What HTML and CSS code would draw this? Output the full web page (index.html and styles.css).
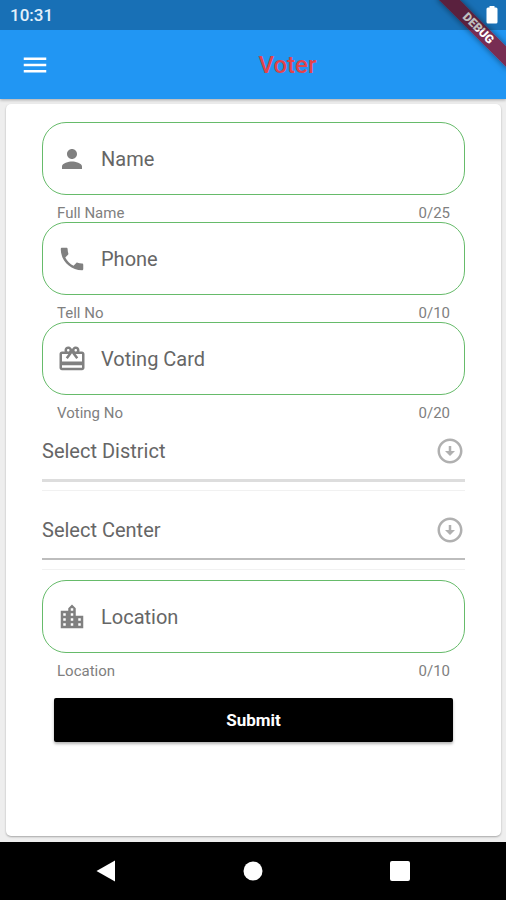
FILE: index.html
```html
<!DOCTYPE html>
<html lang="en">
<head>
    <meta charset="UTF-8" />
    <meta name="viewport" content="width=device-width, initial-scale=1.0"/>
    <title>Voter</title>
    <link rel="stylesheet" href="styles.css">
</head>
<body>
    <header class="top">
        <div class="debug-corner"><span class="debug-banner">DEBUG</span></div>
        <div class="status-bar">
            <span>10:31</span>
            <svg class="battery" viewBox="0 0 12 18" aria-hidden="true"><path d="M3.500 1.500V0h5v1.500H10a1.500 1.500 0 0 1 1.500 1.500v13a1.500 1.500 0 0 1-1.500 1.500H2A1.500 1.500 0 0 1 .5 16V3A1.500 1.500 0 0 1 2 1.500z"/></svg>
        </div>
        <div class="app-bar">
            <button class="menu-btn" type="button" aria-label="Open menu">
                <svg class="icon" viewBox="0 0 24 24"><path d="M3 18h18v-2H3v2zm0-5h18v-2H3v2zm0-7v2h18V6H3z"/></svg>
            </button>
            <h1>Voter</h1>
        </div>
    </header>

    <main>
        <form class="card">
            <div class="field">
                <div class="field-box">
                    <svg class="icon" viewBox="0 0 24 24" aria-hidden="true"><path d="M12 12c2.210 0 4-1.790 4-4s-1.790-4-4-4-4 1.790-4 4 1.790 4 4 4zm0 2c-2.670 0-8 1.340-8 4v2h16v-2c0-2.660-5.330-4-8-4z"/></svg>
                    <input type="text" id="name" placeholder="Name" maxlength="25" autocomplete="off" />
                </div>
                <div class="helper"><label for="name">Full Name</label><span>0/25</span></div>
            </div>

            <div class="field">
                <div class="field-box">
                    <svg class="icon" viewBox="0 0 24 24" aria-hidden="true"><path d="M6.620 10.790c1.440 2.830 3.760 5.140 6.590 6.590l2.200-2.200c.27-.27.67-.36 1.020-.24 1.120.37 2.330.57 3.570.57.55 0 1 .45 1 1V20c0 .55-.45 1-1 1-9.390 0-17-7.610-17-17 0-.55.45-1 1-1h3.500c.55 0 1 .45 1 1 0 1.250.2 2.450.57 3.570.11.35.03.74-.25 1.020l-2.200 2.200z"/></svg>
                    <input type="tel" id="phone" placeholder="Phone" maxlength="10" autocomplete="off" />
                </div>
                <div class="helper"><label for="phone">Tell No</label><span>0/10</span></div>
            </div>

            <div class="field">
                <div class="field-box">
                    <svg class="icon" viewBox="0 0 24 24" aria-hidden="true"><path d="M20 6h-2.180c.11-.31.18-.65.18-1 0-1.660-1.340-3-3-3-1.050 0-1.960.54-2.500 1.350l-.5.67-.5-.68C10.960 2.540 10.050 2 9 2 7.340 2 6 3.340 6 5c0 .35.07.69.18 1H4c-1.110 0-1.990.89-1.990 2L2 19c0 1.110.89 2 2 2h16c1.110 0 2-.89 2-2V8c0-1.110-.89-2-2-2zm-5-2c.55 0 1 .45 1 1s-.45 1-1 1-1-.45-1-1 .45-1 1-1zM9 4c.55 0 1 .45 1 1s-.45 1-1 1-1-.45-1-1 .45-1 1-1zm11 15H4v-2h16v2zm0-5H4V8h5.080L7 10.830 8.620 12 11 8.760l1-1.360 1 1.360L15.380 12 17 10.830 14.920 8H20v6z"/></svg>
                    <input type="text" id="card" placeholder="Voting Card" maxlength="20" autocomplete="off" />
                </div>
                <div class="helper"><label for="card">Voting No</label><span>0/20</span></div>
            </div>

            <div class="select-field">
                <div class="select-box">
                    <select id="district" aria-label="District"><option>Select District</option></select>
                    <svg class="icon" viewBox="0 0 24 24" aria-hidden="true"><path d="M12 4c4.410 0 8 3.590 8 8s-3.590 8-8 8-8-3.590-8-8 3.590-8 8-8m0-2C6.480 2 2 6.480 2 12s4.480 10 10 10 10-4.480 10-10S17.520 2 12 2zm1 10V8h-2v4H8l4 4 4-4h-3z"/></svg>
                </div>
            </div>

            <div class="select-field">
                <div class="select-box center">
                    <select id="center" aria-label="Center"><option>Select Center</option></select>
                    <svg class="icon" viewBox="0 0 24 24" aria-hidden="true"><path d="M12 4c4.410 0 8 3.590 8 8s-3.590 8-8 8-8-3.590-8-8 3.590-8 8-8m0-2C6.480 2 2 6.480 2 12s4.480 10 10 10 10-4.480 10-10S17.520 2 12 2zm1 10V8h-2v4H8l4 4 4-4h-3z"/></svg>
                </div>
            </div>

            <div class="field">
                <div class="field-box">
                    <svg class="icon" viewBox="0 0 24 24" aria-hidden="true"><path d="M15 11V5l-3-3-3 3v2H3v14h18V11h-6zm-8 8H5v-2h2v2zm0-4H5v-2h2v2zm0-4H5V9h2v2zm6 8h-2v-2h2v2zm0-4h-2v-2h2v2zm0-4h-2V9h2v2zm0-4h-2V5h2v2zm6 12h-2v-2h2v2zm0-4h-2v-2h2v2z"/></svg>
                    <input type="text" id="location" placeholder="Location" maxlength="10" autocomplete="off" />
                </div>
                <div class="helper"><label for="location">Location</label><span>0/10</span></div>
            </div>

            <button class="submit-btn" type="submit">Submit</button>
        </form>
    </main>

    <nav class="nav-bar">
        <button type="button" aria-label="Back"><svg viewBox="0 0 22 22"><path d="M1.500 11 20 .5v21z"/></svg></button>
        <button type="button" aria-label="Home"><svg viewBox="0 0 22 22"><circle cx="11" cy="11" r="9.500"/></svg></button>
        <button type="button" aria-label="Recent apps"><svg viewBox="0 0 22 22"><rect x="1" y="1" width="20" height="20" rx="2"/></svg></button>
    </nav>
</body>
</html>
```

FILE: styles.css
```css
:root {
    --primary: #2196f3;
    --outline: #66bb6a;
    --text: #666666;
    --icon: #808080;
}

* {
    box-sizing: border-box;
}

body {
    margin: 0;
    min-height: 100vh;
    display: flex;
    flex-direction: column;
    font-family: Roboto, "Liberation Sans", sans-serif;
    color: var(--text);
    background-color: #eeeeee;
}

button {
    border: none;
    padding: 0;
    background: none;
    font-family: inherit;
    cursor: pointer;
}

.icon {
    width: 30px;
    height: 30px;
    flex-shrink: 0;
    fill: var(--icon);
}

/* header */
.top {
    position: relative;
    background-color: var(--primary);
    box-shadow: 0 1px 3px rgba(0,0,0,0.3);
}

.status-bar {
    position: relative;
    height: 30px;
    padding: 0 8px 0 10px;
    display: flex;
    align-items: center;
    justify-content: space-between;
    background-color: rgba(0,0,0,0.25);
    color: #e3f0fb;
    font-size: 17px;
    font-weight: 500;
    line-height: 30px;
}

.battery {
    width: 12px;
    height: 18px;
    fill: white;
}

.app-bar {
    height: 69px;
    display: flex;
    align-items: center;
}

.menu-btn {
    width: 69px;
    height: 69px;
    display: flex;
    align-items: center;
    justify-content: center;
}

.menu-btn .icon {
    fill: white;
}

h1 {
    flex: 1;
    margin: 0;
    text-align: center;
    font-size: 24px;
    font-weight: 500;
    color: #e2434b;
}

.debug-corner {
    position: absolute;
    top: 0;
    right: 0;
    width: 80px;
    height: 80px;
    overflow: hidden;
}

.debug-banner {
    position: absolute;
    top: 21px;
    right: -22px;
    width: 100px;
    height: 15px;
    line-height: 15px;
    text-align: center;
    font-size: 12px;
    font-weight: 900;
    color: white;
    background-color: rgba(150,10,30,0.75);
    box-shadow: 0 0 6px rgba(0,0,0,0.5);
    transform: rotate(45deg);
}

/* form */
main {
    flex: 1;
    display: flex;
    padding: 5px 5px 6px 6px;
}

.card {
    flex: 1;
    padding: 18px 36px;
    background-color: white;
    border-radius: 5px;
    box-shadow: 0 1px 2px rgba(0,0,0,0.3);
}

.field-box {
    height: 73px;
    padding: 0 14px;
    display: flex;
    align-items: center;
    gap: 14px;
    border: 1px solid var(--outline);
    border-radius: 24px;
}

.field-box input {
    flex: 1;
    min-width: 0;
    padding: 0;
    border: none;
    outline: none;
    background: none;
    font-family: inherit;
    font-size: 20px;
    color: var(--text);
}

.field-box input::placeholder {
    color: var(--text);
    opacity: 1;
}

.helper {
    height: 27px;
    padding: 9px 15px 0;
    display: flex;
    justify-content: space-between;
    font-size: 15px;
    line-height: 18px;
    color: #808080;
}

.select-field {
    height: 69px;
    margin-bottom: 10px;
    border-bottom: 1px solid #f1f1f1;
}

.select-box {
    display: flex;
    align-items: center;
    border-bottom: 3px solid #dddddd;
}

.select-box.center {
    border-bottom: 2px solid #bdbdbd;
}

.select-box select {
    flex: 1;
    height: 57px;
    padding: 0;
    border: none;
    outline: none;
    appearance: none;
    background: none;
    font-family: inherit;
    font-size: 20px;
    color: var(--text);
}

.select-box .icon {
    fill: #b0b0b0;
    pointer-events: none;
}

.submit-btn {
    display: block;
    width: calc(100% - 24px);
    height: 44px;
    margin: 18px 12px 0;
    border-radius: 2px;
    background-color: black;
    color: white;
    font-size: 17px;
    font-weight: 700;
    box-shadow: 0 2px 3px rgba(0,0,0,0.3);
}

/* system navigation */
.nav-bar {
    height: 58px;
    padding: 0 33px;
    display: flex;
    background-color: black;
}

.nav-bar button {
    flex: 1;
    display: flex;
    align-items: center;
    justify-content: center;
}

.nav-bar svg {
    width: 22px;
    height: 22px;
    fill: white;
}
```
